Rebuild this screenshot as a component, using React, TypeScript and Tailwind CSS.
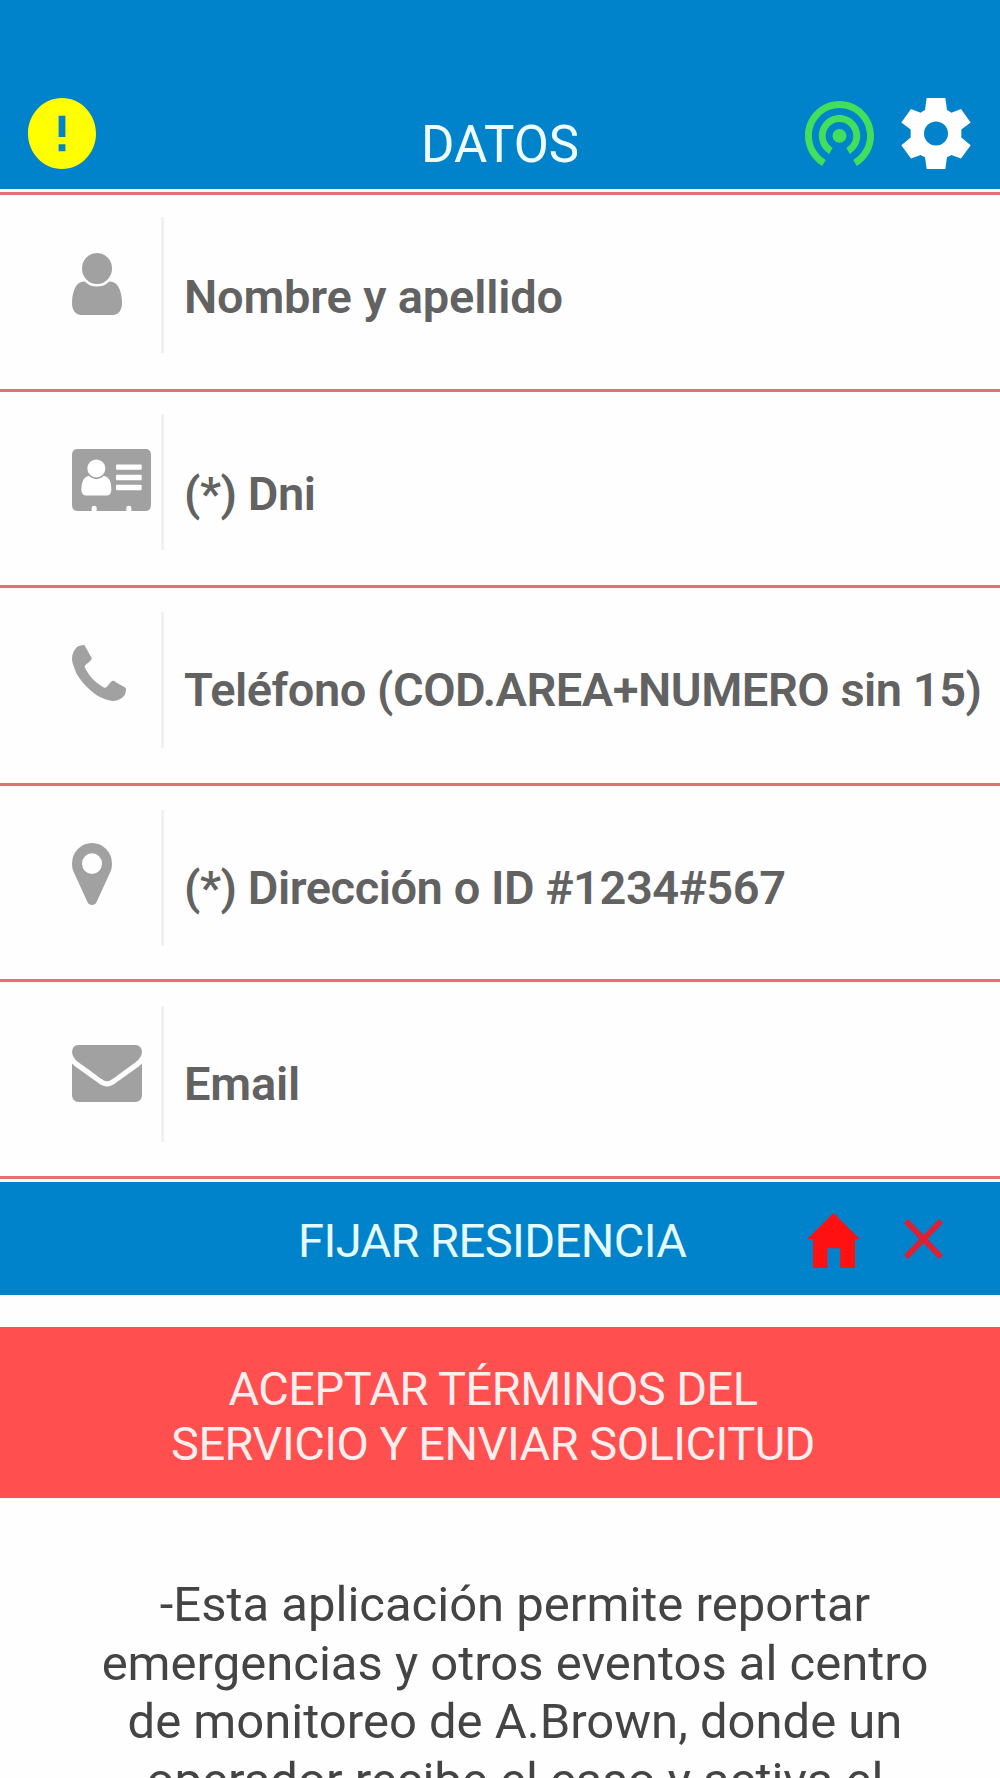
import type { ReactNode } from 'react';

interface IconProps {
  className?: string;
  viewBox: string;
  children: ReactNode;
}

const Icon = ({ className = '', viewBox, children }: IconProps) => (
  <svg className={`shrink-0 ${className}`} viewBox={viewBox} preserveAspectRatio="none" fill="currentColor" xmlns="http://www.w3.org/2000/svg">
    {children}
  </svg>
);

const UserIcon = () => (
  <Icon className="mt-[58px] h-[62px] w-[50px]" viewBox="256 128 1280 1536">
    <path d="M1536 1399q0 109-62.5 187t-150.5 78h-854q-88 0-150.5-78t-62.5-187q0-85 8.5-160.5t31.5-152 58.5-131 94-89 134.5-34.5q131 128 313 128t313-128q76 0 134.5 34.5t94 89 58.5 131 31.5 152 8.5 160.5zm-256-887q0 159-112.5 271.5t-271.5 112.5-271.5-112.5-112.5-271.5 112.5-271.5 271.5-112.5 271.5 112.5 112.5 271.5z" />
  </Icon>
);

const CardIcon = () => (
  <Icon className="mt-[57px] h-[62px] w-[79px]" viewBox="0 0 237 185">
    <path d="M17 0H220Q237 0 237 17V168Q237 185 220 185H178V175Q178 169 170.5 169T163 175V185H74V175Q74 169 66.5 169T59 175V185H17Q0 185 0 168V17Q0 0 17 0Z" />
    <g fill="#fff">
      <circle cx="73" cy="58" r="27" />
      <path d="M50 80Q73 101 96 80Q119 85 118 121Q118 139 103 139H43Q28 139 28 121Q28 85 50 80Z" />
      <rect x="132" y="46" width="77" height="16" rx="3" />
      <rect x="132" y="77" width="77" height="16" rx="3" />
      <rect x="132" y="107" width="77" height="16" rx="3" />
    </g>
  </Icon>
);

const PhoneIcon = () => (
  <Icon className="mt-[57px] h-[56px] w-[54px]" viewBox="192 128 1408 1408">
    <path d="M1600 1240q0 27-10 70.5t-21 68.5q-21 50-122 106-94 51-186 51-27 0-53-3.5t-57.5-12.5-47-14.5-55.5-20.5-49-18q-98-35-175-83-127-79-264-216t-216-264q-48-77-83-175-3-9-18-49t-20.5-55.5-14.5-47-12.5-57.5-3.5-53q0-92 51-186 56-101 106-122 25-11 68.5-21t70.5-10q14 0 21 3 18 6 53 76 11 19 30 54t35 63.5 31 53.5q3 4 17.5 25t21.5 35.5 7 28.5q0 20-28.5 50t-62 55-62 53-28.5 46q0 9 5 22.5t8.5 20.5 14 24 11.5 19q76 137 174 235t235 174q2 1 19 11.5t24 14 20.5 8.5 22.5 5q18 0 46-28.5t53-62 55-62 50-28.5q14 0 28.5 7t35.5 21.5 25 17.5q25 15 53.5 31t63.5 35 54 30q70 35 76 53 3 7 3 21z" />
  </Icon>
);

const MarkerIcon = () => (
  <Icon className="mt-[57px] h-[62px] w-[40px]" viewBox="384 128 1024 1536">
    <path d="M1152 640q0-106-75-181t-181-75-181 75-75 181 75 181 181 75 181-75 75-181zm256 0q0 109-33 179l-364 774q-16 33-47.5 52t-67.5 19-67.5-19-46.5-52l-365-774q-33-70-33-179 0-212 150-362t362-150 362 150 150 362z" />
  </Icon>
);

const EnvelopeIcon = () => (
  <Icon className="mt-[63px] h-[57px] w-[70px]" viewBox="0 256 1792 1408">
    <path d="M1792 710v794q0 66-47 113t-113 47h-1472q-66 0-113-47t-47-113v-794q44 49 101 87 362 246 497 345 57 42 92.5 65.5t94.5 48 110 24.5h2q51 0 110-24.5t94.5-48 92.5-65.5q170-123 498-345 57-39 100-87zm0-294q0 79-49 151t-122 123q-376 261-468 325-10 7-42.5 31t-54 38.5-52 32.5-57.5 27-50 9h-2q-23 0-50-9t-57.5-27-52-32.5-54-38.5-42.5-31q-91-64-262-182.5t-205-142.5q-62-42-117-115.5t-55-136.5q0-78 41.5-130t118.5-52h1472q65 0 112.5 47t47.5 113z" />
  </Icon>
);

const fields = [
  { label: 'Nombre y apellido', icon: <UserIcon />, row: 'h-[197px]', divider: 'mt-[22px]', text: 'tracking-[-0.2px]' },
  { label: '(*) Dni', icon: <CardIcon />, row: 'h-[196px]', divider: 'mt-[22px]', text: 'tracking-[-0.45px]' },
  { label: 'Teléfono (COD.AREA+NUMERO sin 15)', icon: <PhoneIcon />, row: 'h-[198px]', divider: 'mt-[24px]', text: 'tracking-[-0.48px]' },
  { label: '(*) Dirección o ID #1234#567', icon: <MarkerIcon />, row: 'h-[196px]', divider: 'mt-[24px]', text: 'tracking-[-0.45px]' },
  { label: 'Email', icon: <EnvelopeIcon />, row: 'h-[197px]', divider: 'mt-[24px]', text: 'tracking-[-0.2px]' },
];

const Header = () => (
  <header className="flex h-[189px] items-start bg-[#0083cb] pt-[98px] pl-7 text-white">
    <Icon className="h-[71px] w-[68px] text-[#ffff00]" viewBox="2 2 20 20">
      <path d="M12 2C6.48 2 2 6.48 2 12s4.48 10 10 10 10-4.48 10-10S17.52 2 12 2zm1 15h-2v-2h2v2zm0-4h-2V7h2v6z" />
    </Icon>
    <h1 className="mt-[17px] ml-[325px] w-[384px] text-[51px] leading-[60px] whitespace-nowrap text-[#effdff]">DATOS</h1>
    <Icon className="mt-[3px] h-[65px] w-[69px] text-[#42df5c]" viewBox="2 3 20 18.65">
      <path d="M12 11c-1.1 0-2 .9-2 2s.9 2 2 2 2-.9 2-2-.9-2-2-2zm6 2c0-3.31-2.69-6-6-6s-6 2.69-6 6c0 2.22 1.21 4.15 3 5.19l1-1.74c-1.19-.7-2-1.97-2-3.45 0-2.21 1.79-4 4-4s4 1.79 4 4c0 1.48-.81 2.75-2 3.45l1 1.74c1.79-1.04 3-2.97 3-5.19zM12 3C6.48 3 2 7.48 2 13c0 3.7 2.01 6.92 4.99 8.65l1-1.73C5.61 18.53 4 15.96 4 13c0-4.42 3.58-8 8-8s8 3.58 8 8c0 2.96-1.61 5.53-4 6.92l1 1.73c2.99-1.73 5-4.95 5-8.65 0-5.52-4.48-10-10-10z" />
    </Icon>
    <Icon className="ml-[27px] h-[71px] w-[70px]" viewBox="-105 -106 210 212">
      <path
        fillRule="evenodd"
        d="M-28-106H28L33-70Q40-67 46-62L75-73L104-33L76-12V12L104 35L75 75L46 64Q40 68 33 70L28 106H-28L-33 70Q-40 68-46 64L-75 75L-104 35L-76 12V-12L-104-33L-75-73L-46-62Q-40-67-33-70ZM0-36A36 36 0 1 0 0 36A36 36 0 1 0 0-36Z"
      />
    </Icon>
  </header>
);

const App = () => {
  return (
    <div className="h-[1778px] w-[1000px] overflow-hidden bg-[#fefefe] font-[Roboto,sans-serif]">
      <Header />

      <ul className="mt-[3px] border-t-3 border-[#e17174]">
        {fields.map((field) => (
          <li key={field.label} className={`flex border-b-3 border-[#e17174] text-[#a1a1a1] ${field.row}`}>
            <div className="w-[161px] pl-[72px]">{field.icon}</div>
            <div className={`h-[136px] w-[3px] bg-[#f1f1f1] ${field.divider}`} />
            <span className={`mt-[74px] ml-[20px] text-[47px] leading-[55px] font-semibold whitespace-nowrap text-[#626262] ${field.text}`}>
              {field.label}
            </span>
          </li>
        ))}
      </ul>

      <button className="mt-[3px] flex h-[113px] w-full items-start bg-[#0083cb] pl-[298px] text-[47px] leading-[55px] text-[#e6fbff]">
        <span className="mt-[31px] w-[509px] text-left tracking-[-0.56px] whitespace-nowrap">FIJAR RESIDENCIA</span>
        <Icon className="mt-[31px] h-[55px] w-[53px] text-[#ff1111]" viewBox="322 157 158 164">
          <path d="M401 157L480 235H465V320H421V262H383V320H340V235H322Z" />
        </Icon>
        <Icon className="mt-[36px] ml-[43px] h-[42px] w-[41px] text-[#e11f32]" viewBox="0 0 42 42">
          <path d="M3 3L39 39M39 3L3 39" stroke="currentColor" strokeWidth="6" />
        </Icon>
      </button>

      <button className="mt-[32px] h-[171px] w-full bg-[#ff4f4f] pt-[6px] pr-[14px] text-center text-[47px] leading-[55px] tracking-[-0.53px] text-[#ffeeee]">
        ACEPTAR TÉRMINOS DEL
        <br />
        SERVICIO Y ENVIAR SOLICITUD
      </button>

      <p className="mt-[78px] ml-[30px] text-center text-[49px] leading-[58.5px] whitespace-nowrap text-[#444444]">
        -Esta aplicación permite reportar
        <br />
        emergencias y otros eventos al centro
        <br />
        de monitoreo de A.Brown, donde un
        <br />
        operador recibe el caso y activa el
      </p>
    </div>
  );
};

export default App;
